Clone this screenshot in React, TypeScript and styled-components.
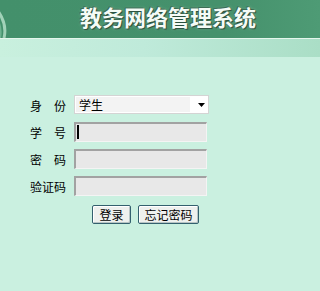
import React from 'react'
import styled, { createGlobalStyle } from 'styled-components'

const GlobalStyle = createGlobalStyle`
    html, body {
        margin: 0;
        padding: 0;
        background: #caf0e0;
    }
    body {
        font-family: "Noto Sans CJK SC", "DejaVu Sans", sans-serif;
        font-size: 12px;
        color: #000;
    }
`

const Page = styled.div`
    width: 100%;
    min-width: 278px;
    height: 291px;
    overflow: hidden;
    background: #caf0e0;
`

const Header = styled.div`
    height: 38px;
    display: flex;
    align-items: flex-start;
    background: linear-gradient(90deg, #43906b 0%, #45916c 70%, #4e9b75 100%);
    overflow: hidden;
`

const Title = styled.h1`
    margin: 3px 0 0 68px;
    font-size: 22px;
    line-height: 26px;
    font-weight: 700;
    white-space: nowrap;
    color: #f4fbf6;
    letter-spacing: 0;
    text-shadow: 0 0 1px #1f4a36, 1px 1px 1px #2a4d3c, -1px -1px 1px #3d6d55, 0 0 3px #9fd0b4;
`

const Band = styled.div`
    height: 18px;
    border-top: 1px solid #e4f6ec;
    background: linear-gradient(90deg, #c9f0de 0%, #bfeada 45%, #aadec6 100%);
`

const Form = styled.form`
    margin: 34px 0 0 30px;
    display: flex;
    flex-direction: column;
`

const Row = styled.div`
    height: 27px;
    display: flex;
    align-items: center;
`

const Label = styled.label`
    width: 44px;
    padding-top: 3px;
    font-size: 12px;
    line-height: 14px;
    white-space: pre;
`

const SelectBox = styled.div`
    width: 133px;
    height: 17px;
    display: flex;
    align-items: center;
    background: #fff;
    border: 1px solid #d4d4d4;
`

const SelectValue = styled.span`
    margin-left: 1px;
    width: 114px;
    height: 15px;
    line-height: 15px;
    padding-left: 3px;
    box-sizing: border-box;
    background: #f3f3f3;
    font-size: 12px;
`

const Arrow = styled.svg`
    margin-left: 8px;
    width: 7px;
    height: 4px;
`

const FieldWrap = styled.div`
    position: relative;
    width: 133px;
    height: 20px;
`

const TextInput = styled.input`
    width: 133px;
    height: 20px;
    box-sizing: border-box;
    margin: 0;
    padding: 0 3px;
    background: #e8e8e8;
    border-style: solid;
    border-width: 2px 1px 1px 2px;
    border-color: #a2a2a2 #f4f4f4 #f4f4f4 #a2a2a2;
    font-size: 12px;
    outline: none;
`

const Caret = styled.span`
    position: absolute;
    left: 3px;
    top: 3px;
    width: 2px;
    height: 14px;
    background: #000;
`

const Buttons = styled.div`
    margin: 6px 0 0 62px;
    display: flex;
    gap: 7px;
`

const Button = styled.button<{ $w: number }>`
    width: ${p => p.$w}px;
    height: 19px;
    padding: 0;
    margin: 0;
    font-family: "Noto Sans CJK SC", "DejaVu Sans", sans-serif;
    font-size: 12px;
    line-height: 15px;
    color: #000;
    background: #eef0ee;
    border: 1px solid #33606e;
    border-radius: 2px;
    box-shadow: inset 1px 1px 0 #ffffff, inset -1px -1px 0 #b8c4c4;
`

const fields = [
    { label: '学　号', type: 'text', caret: true },
    { label: '密　码', type: 'password', caret: false },
    { label: '验证码', type: 'text', caret: false },
]

export default function App() {
    return (
        <Page>
            <GlobalStyle />
            <Header>
                <svg width="12" height="38" viewBox="0 0 12 38">
                    <path d="M-6 6 Q8 22 4 38" stroke="#b9e2cc" strokeWidth="3" fill="none" opacity="0.8" />
                    <path d="M-8 12 Q3 24 0 38" stroke="#7fc2a0" strokeWidth="2" fill="none" opacity="0.7" />
                </svg>
                <Title>教务网络管理系统</Title>
            </Header>
            <Band />
            <Form onSubmit={e => e.preventDefault()}>
                <Row>
                    <Label>身　份</Label>
                    <SelectBox>
                        <SelectValue>学生</SelectValue>
                        <Arrow viewBox="0 0 7 4">
                            <path d="M0 0 H7 L3.5 4 Z" fill="#000" />
                        </Arrow>
                    </SelectBox>
                </Row>
                {fields.map(f => (
                    <Row key={f.label}>
                        <Label>{f.label}</Label>
                        <FieldWrap>
                            <TextInput type={f.type} />
                            {f.caret && <Caret />}
                        </FieldWrap>
                    </Row>
                ))}
                <Buttons>
                    <Button type="submit" $w={39}>登录</Button>
                    <Button type="button" $w={61}>忘记密码</Button>
                </Buttons>
            </Form>
        </Page>
    )
}
